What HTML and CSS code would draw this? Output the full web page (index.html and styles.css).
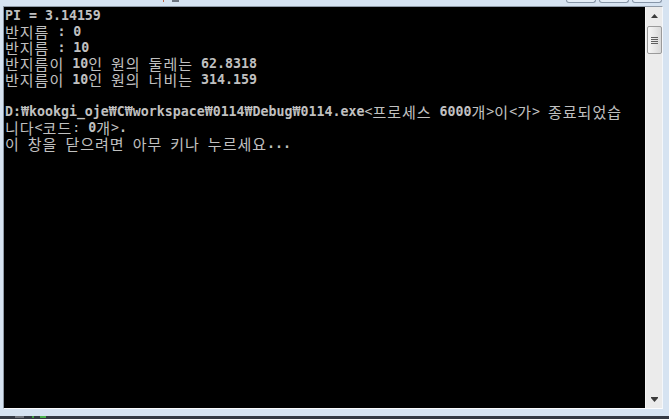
FILE: index.html
```html
<!DOCTYPE html>
<html lang="ko">
<head>
  <meta charset="UTF-8" />
  <title>0114.exe</title>
  <link rel="stylesheet" href="styles.css">
</head>
<body>
<div class="window">
  <div class="titlebar">
    <span class="tb-mark red"></span>
    <span class="tb-mark dark"></span>
    <div class="caption">
      <span class="cap-btn"></span>
      <span class="cap-btn"></span>
      <span class="cap-btn"></span>
    </div>
  </div>
  <div class="client">
    <div class="console">
      <div class="ln">PI = 3.14159</div>
      <div class="ln"><span class="ko">반지름</span> : 0</div>
      <div class="ln"><span class="ko">반지름</span> : 10</div>
      <div class="ln"><span class="ko">반지름이</span> 10<span class="ko">인</span> <span class="ko">원의</span> <span class="ko">둘레는</span> 62.8318</div>
      <div class="ln"><span class="ko">반지름이</span> 10<span class="ko">인</span> <span class="ko">원의</span> <span class="ko">너비는</span> 314.159</div>
      <div class="ln"> </div>
      <div class="ln">D:₩kookgi_oje₩C₩workspace₩0114₩Debug₩0114.exe<span class="th">&lt;</span><span class="ko">프로세스</span> 6000<span class="ko">개</span><span class="th">&gt;</span><span class="ko">이</span><span class="th">&lt;</span><span class="ko">가</span><span class="th">&gt;</span> <span class="ko">종료되었습</span></div>
      <div class="ln"><span class="ko">니다</span><span class="th">&lt;</span><span class="ko">코드</span><span class="th">:</span> 0<span class="ko">개</span><span class="th">&gt;</span>.</div>
      <div class="ln"><span class="ko">이</span> <span class="ko">창을</span> <span class="ko">닫으려면</span> <span class="ko">아무</span> <span class="ko">키나</span> <span class="ko">누르세요</span>...</div>
    </div>
    <div class="scrollbar">
      <div class="arrow">
        <svg width="7" height="4" viewBox="0 0 7 4"><path d="M3.5 0 L7 4 L0 4 Z" fill="#3b3b3b"/></svg>
      </div>
      <div class="thumb">
        <i></i><i></i><i></i><i></i>
      </div>
      <div class="track"></div>
      <div class="arrow">
        <svg width="7" height="5" viewBox="0 0 7 5"><path d="M0 0 H7 V1 H0 Z M0 1 L7 1 L3.5 5 Z" fill="#3b3b3b"/></svg>
      </div>
    </div>
  </div>
  <div class="frame-bottom"></div>
  <div class="taskbar">
    <span class="tk gray"></span>
    <span class="tk green small"></span>
    <span class="tk green"></span>
  </div>
</div>
</body>
</html>
```

FILE: styles.css
```css
* {
  margin: 0;
  padding: 0;
  box-sizing: border-box;
}
html, body {
  width: 669px;
  height: 419px;
  overflow: hidden;
  background: #d6e3f1;
}
.window {
  width: 669px;
  height: 419px;
  display: flex;
  flex-direction: column;
  background: #d6e3f1;
}
.titlebar {
  height: 6px;
  display: flex;
  align-items: flex-start;
}
.tb-mark {
  height: 2px;
}
.tb-mark.red {
  width: 1px;
  margin-left: 163px;
  background: #c06a4a;
}
.tb-mark.dark {
  width: 7px;
  margin-left: 8px;
  background: #6c7480;
}
.caption {
  margin-left: auto;
  margin-right: 7px;
  display: flex;
  gap: 3px;
}
.cap-btn {
  width: 30px;
  height: 3px;
  border: 1px solid #8796a8;
  border-top: none;
  border-radius: 0 0 3px 3px;
  background: #e4edf7;
}
.client {
  height: 403px;
  margin: 0 6px 0 3px;
  display: flex;
  border-top: 1px solid #8f9aa7;
  border-left: 1px solid #8f9aa7;
  border-bottom: 1px solid #fbfcfe;
  border-right: 1px solid #f4f7fb;
}
.console {
  width: 641px;
  background: #000;
  color: #c0c0c0;
  padding: 1px 0 0 1px;
  font-family: "DejaVu Sans Mono", "Liberation Mono", monospace;
  font-weight: bold;
  font-size: 13.288px;
  line-height: 16px;
}
.ln {
  height: 16px;
  white-space: pre;
}
.ko {
  display: inline-block;
  height: 16px;
  line-height: 16px;
  vertical-align: top;
  font-family: "Noto Sans CJK KR", sans-serif;
  font-weight: normal;
  font-size: 15px;
  letter-spacing: 1px;
}
.th {
  font-weight: normal;
}
.scrollbar {
  width: 17px;
  background: #ebebeb;
  border-left: 1px solid #f5f5f5;
  display: flex;
  flex-direction: column;
  align-items: center;
}
.arrow {
  height: 18px;
  display: flex;
  align-items: center;
  justify-content: center;
}
.arrow svg {
  display: block;
}
.thumb {
  width: 15px;
  height: 28px;
  margin-top: 1px;
  border: 1px solid #9a9a9a;
  border-radius: 2px;
  background: linear-gradient(to right, #f6f6f6, #e4e4e4 60%, #d8d8d8);
  display: flex;
  flex-direction: column;
  align-items: center;
  justify-content: center;
  gap: 1px;
}
.thumb i {
  display: block;
  width: 7px;
  height: 1px;
  background: #5e5e5e;
}
.track {
  flex: 1;
}
.frame-bottom {
  height: 7px;
}
.taskbar {
  height: 3px;
  background: #343943;
  display: flex;
  align-items: flex-start;
}
.tk {
  height: 2px;
}
.tk.gray {
  width: 9px;
  margin-left: 15px;
  background: #6f737a;
}
.tk.green.small {
  width: 2px;
  margin-left: 8px;
  background: #3f9a3f;
}
.tk.green {
  width: 6px;
  margin-left: 6px;
  background: #4cb24c;
}
```
